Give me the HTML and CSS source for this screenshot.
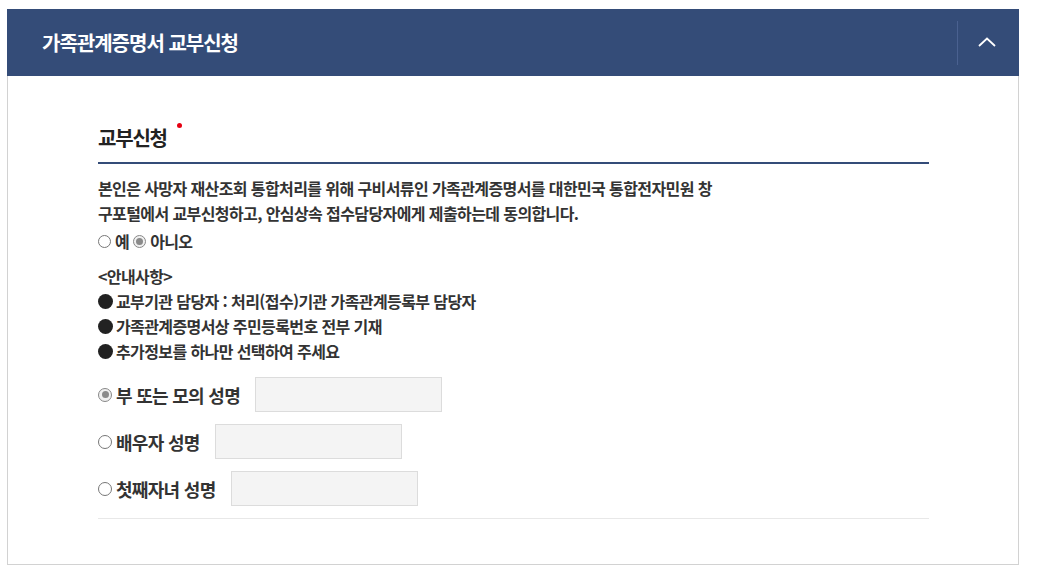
FILE: index.html
```html
<!DOCTYPE html>
<html lang="ko">
<head>
<meta charset="utf-8">
<title>가족관계증명서 교부신청</title>
<link rel="stylesheet" href="styles.css">
</head>
<body>
<div class="page">
  <section class="panel">
    <header class="panel-head">
      <h2 class="panel-title">가족관계증명서 교부신청</h2>
      <button class="toggle" type="button" aria-label="접기">
        <svg width="18" height="10" viewBox="0 0 18 10"><path d="M1 9 L9 1.5 L17 9" fill="none" stroke="#fff" stroke-width="1.8"/></svg>
      </button>
    </header>
    <div class="panel-body">
      <h3 class="sec-title">교부신청<span class="req"></span></h3>
      <p class="agree">본인은 사망자 재산조회 통합처리를 위해 구비서류인 가족관계증명서를 대한민국 통합전자민원 창<br>구포털에서 교부신청하고, 안심상속 접수담당자에게 제출하는데 동의합니다.</p>
      <div class="choice">
        <label class="opt"><span class="radio"></span>예</label>
        <label class="opt"><span class="radio on"></span>아니오</label>
      </div>
      <div class="notice">
        <p>&lt;안내사항&gt;</p>
        <p><span class="dot"></span>교부기관 담당자 : 처리(접수)기관 가족관계등록부 담당자</p>
        <p><span class="dot"></span>가족관계증명서상 주민등록번호 전부 기재</p>
        <p><span class="dot"></span>추가정보를 하나만 선택하여 주세요</p>
      </div>
      <div class="rows">
        <div class="row"><label class="opt big"><span class="radio on"></span>부 또는 모의 성명</label><span class="field"></span></div>
        <div class="row"><label class="opt big"><span class="radio"></span>배우자 성명</label><span class="field"></span></div>
        <div class="row"><label class="opt big"><span class="radio"></span>첫째자녀 성명</label><span class="field"></span></div>
      </div>
      <div class="end-line"></div>
    </div>
  </section>
</div>
</body>
</html>
```
FILE: styles.css
```css
* { box-sizing: border-box; }
html, body { margin: 0; padding: 0; background: #fff; }
body {
  font-family: "Noto Sans CJK KR", "Noto Sans", sans-serif;
  color: #333;
}
.page { padding: 9px 20px 0 7px; }
.panel { width: 1012px; }
.panel-head {
  height: 67px;
  background: #344c78;
  display: flex;
  align-items: center;
  justify-content: space-between;
}
.panel-title {
  margin: 0 0 0 35px;
  font-size: 20px;
  font-weight: 700;
  letter-spacing: -1px;
  color: #fff;
  line-height: 26px;
}
.toggle {
  height: 44px;
  width: 62px;
  border: 0;
  border-left: 1px solid #4a6190;
  background: transparent;
  display: flex;
  align-items: center;
  justify-content: center;
  padding: 0 3px 2px 0;
  margin-top: 0;
}
.panel-body {
  border: 1px solid #d2d2d2;
  border-top: 0;
  padding: 49px 89px 45px 90px;
}
.sec-title {
  margin: 0;
  font-size: 20px;
  font-weight: 700;
  letter-spacing: -1.2px;
  color: #222;
  line-height: 26px;
  padding-bottom: 11px;
  border-bottom: 2px solid #344c78;
  display: flex;
  align-items: flex-start;
}
.req {
  width: 5px;
  height: 5px;
  border-radius: 50%;
  background: #e60012;
  margin: -2px 0 0 10px;
}
.agree {
  margin: 12px 0 0;
  font-size: 16px;
  font-weight: 700;
  letter-spacing: -0.6px;
  line-height: 25px;
}
.choice {
  display: flex;
  align-items: center;
  height: 30px;
  font-size: 16px;
  font-weight: 700;
  letter-spacing: -0.6px;
}
.opt { display: inline-flex; align-items: center; }
.radio {
  width: 13px;
  height: 13px;
  border-radius: 50%;
  border: 1px solid #777;
  background: #fff;
  margin-right: 4px;
  position: relative;
  flex: none;
}
.radio.on { border-color: #888; background: #f0f0f0; }
.radio.on::after {
  content: "";
  position: absolute;
  left: 2px; top: 2px;
  width: 7px; height: 7px;
  border-radius: 50%;
  background: #8a8a8a;
}
.choice .opt + .opt { margin-left: 4px; }
.notice { margin-top: 8px; }
.notice p {
  margin: 0;
  font-size: 16px;
  font-weight: 700;
  letter-spacing: -0.6px;
  line-height: 25px;
  display: flex;
  align-items: center;
}
.dot {
  width: 15px;
  height: 15px;
  border-radius: 50%;
  background: #222;
  margin-right: 3px;
  flex: none;
}
.rows { margin-top: 13px; display: flex; flex-direction: column; gap: 12px; }
.row { display: flex; align-items: center; height: 35px; }
.big {
  font-size: 18px;
  font-weight: 700;
  letter-spacing: -0.7px;
  color: #333;
}
.big .radio { width: 14px; height: 14px; margin-right: 4px; }
.big .radio.on::after { left: 2.5px; top: 2.5px; }
.field {
  width: 187px;
  height: 35px;
  margin-left: 15px;
  background: #f4f4f4;
  border: 1px solid #dcdcdc;
}
.end-line { margin-top: 12px; border-top: 1px solid #e8e8e8; }
```
